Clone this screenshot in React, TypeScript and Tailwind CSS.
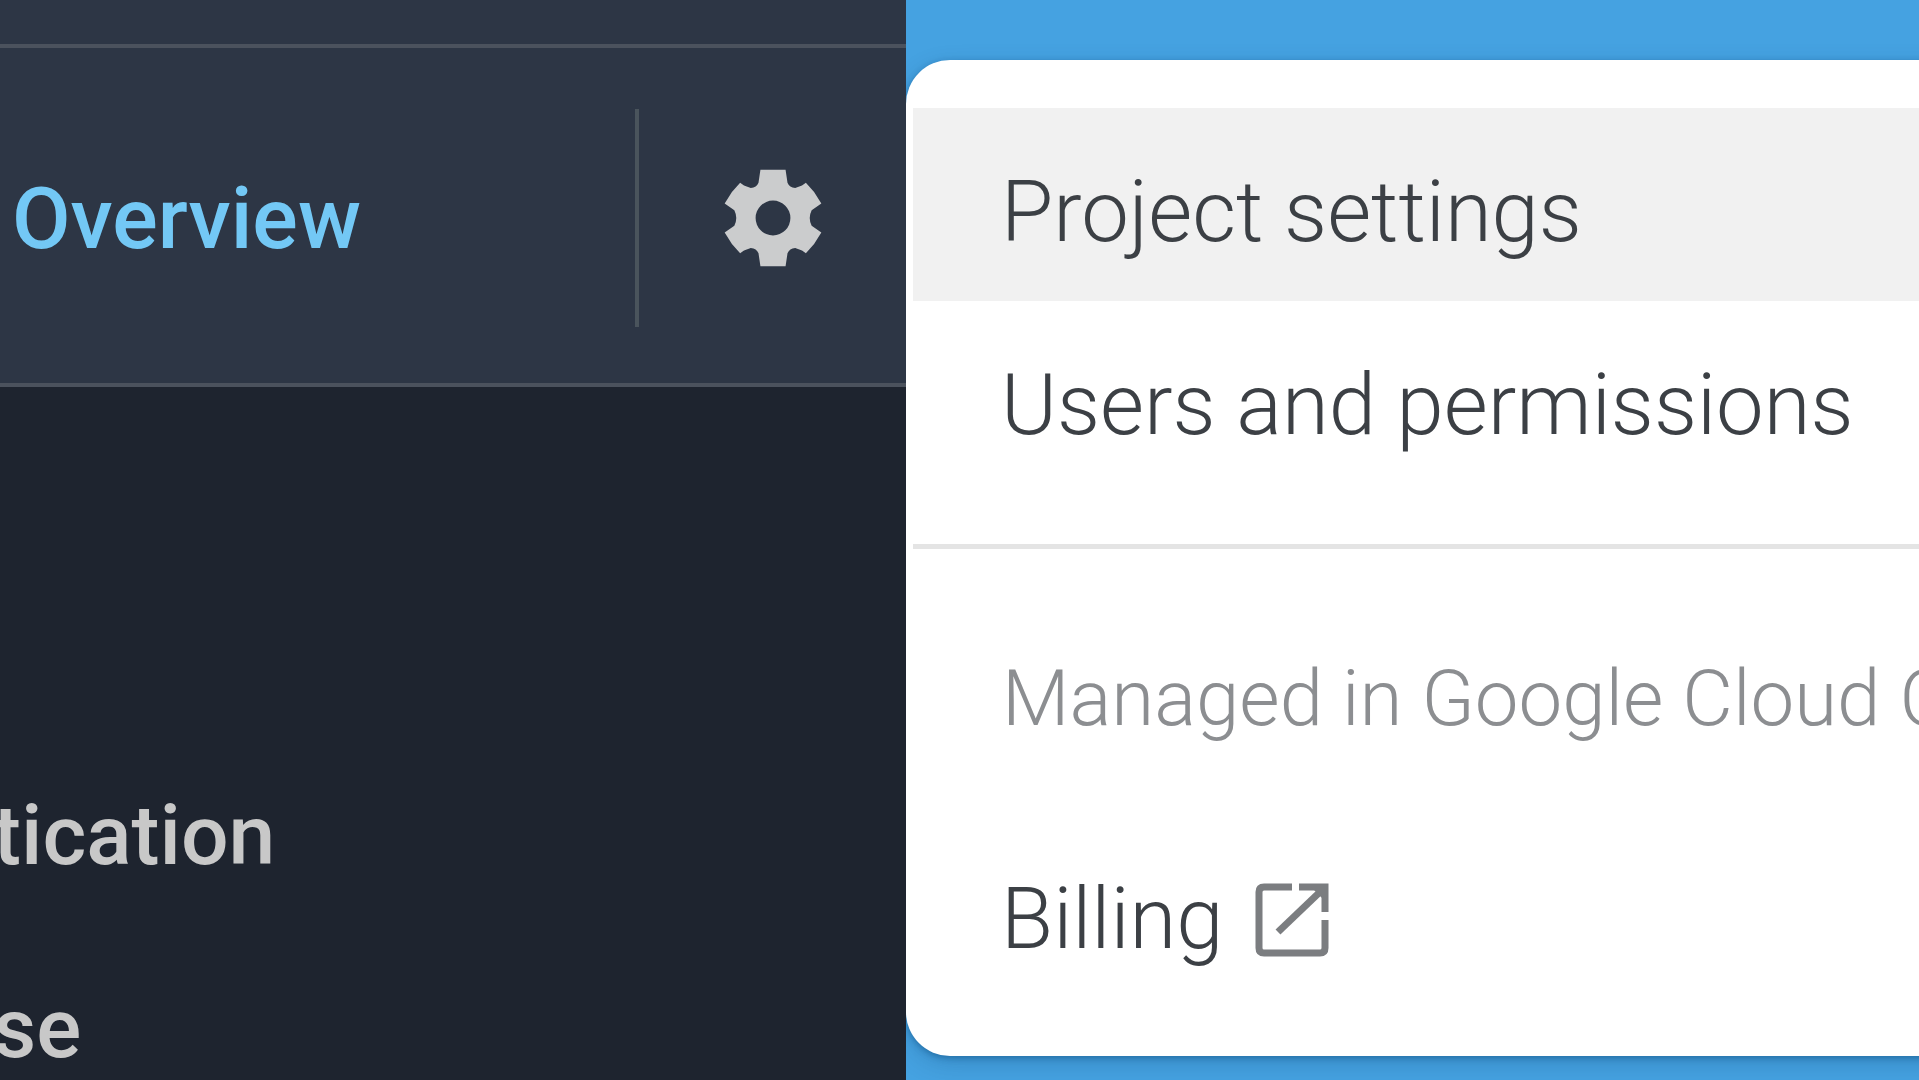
import React from 'react';

interface MenuItem {
  label: string;
  active?: boolean;
}

const projectItems: MenuItem[] = [
  { label: 'Project settings', active: true },
  { label: 'Users and permissions' },
];

const GearIcon: React.FC = () => (
  <svg viewBox="0 0 24 24" className="size-[116px]" fill="currentColor" fillRule="evenodd" aria-hidden="true">
    <path d="M9.4 2H14.6L15 4.7Q15.4 5.7 16.6 5.8L18 5.3 18.8 4.7 20.5 6.6 22 9 20 10.4Q19.2 12 20 13.6L22 15 20.5 17.4 18.8 19.3 18 18.7 16.6 18.2Q15.4 18.3 15 19.3L14.6 22H9.4L9 19.3Q8.6 18.3 7.4 18.2L6 18.7 5.2 19.3 3.5 17.4 2 15 4 13.6Q4.8 12 4 10.4L2 9 3.5 6.6 5.2 4.7 6 5.3 7.4 5.8Q8.6 5.7 9 4.7ZM12 8.4A3.6 3.6 0 1 0 12 15.6A3.6 3.6 0 1 0 12 8.4Z" />
  </svg>
);

const OpenInNewIcon: React.FC = () => (
  <svg viewBox="0 0 74 74" className="size-[74px] shrink-0" fill="none" stroke="#7b7d80" strokeWidth="7" aria-hidden="true">
    <path d="M37 4H9Q4 4 4 9V65Q4 70 9 70H65Q70 70 70 65V37" />
    <path d="M23 49L67 7" />
    <path d="M44 4H70V29" />
    <path d="M56 4H70V18Z" fill="#7b7d80" stroke="none" />
  </svg>
);

const Sidebar: React.FC = () => (
  <nav className="w-[906px] shrink-0 overflow-hidden bg-[#1e242f]">
    <div className="h-11 bg-[#2d3645]" />
    <div className="flex h-[343px] items-center border-y-4 border-[#4b525d] bg-[#2d3645] pt-1">
      <a href="#overview" className="flex-1 pt-1 pl-3 text-[85px] leading-none font-medium text-[#73c8f5]">Overview</a>
      <div className="flex h-[218px] w-[271px] items-center justify-center border-l-4 border-[#4a545c]">
        <button aria-label="Settings" className="text-[#cbcccd]">
          <GearIcon />
        </button>
      </div>
    </div>
    <div className="flex flex-col pt-[352px] text-[84px] leading-[193px] font-medium text-[#c8c8c8]">
      <a href="#authentication" className="-ml-[7px]">tication</a>
      <a href="#database" className="-ml-[7px]">se</a>
    </div>
  </nav>
);

const SettingsMenu: React.FC = () => (
  <div className="mt-[60px] h-fit flex-1 rounded-l-[44px] bg-white py-12 pl-[7px] text-[85px] leading-[177px] font-light whitespace-nowrap text-[#3c4045] shadow-[0_2px_6px_rgba(0,60,110,0.4),0_8px_24px_rgba(0,50,90,0.2)]">
    {projectItems.map(item => (
      <a key={item.label} href="#menu" className={`block pt-4 pl-[88px] ${item.active ? 'bg-[#f1f1f1]' : ''}`}>{item.label}</a>
    ))}
    <hr className="mt-[50px] border-t-5 border-[#e4e4e4]" />
    <p className="pt-[98px] pl-[89px] text-[78px] leading-[104px] text-[#8c8e91]">Managed in Google Cloud Console</p>
    <a href="#billing" className="mt-16 flex items-center gap-8 pt-4 pl-[88px]">
      Billing
      <OpenInNewIcon />
    </a>
  </div>
);

export default function App() {
  return (
    <div className="flex h-screen overflow-hidden bg-[#45a2e1] font-['Roboto',sans-serif]">
      <Sidebar />
      <main className="flex min-w-0 flex-1 overflow-hidden">
        <SettingsMenu />
      </main>
    </div>
  );
}
